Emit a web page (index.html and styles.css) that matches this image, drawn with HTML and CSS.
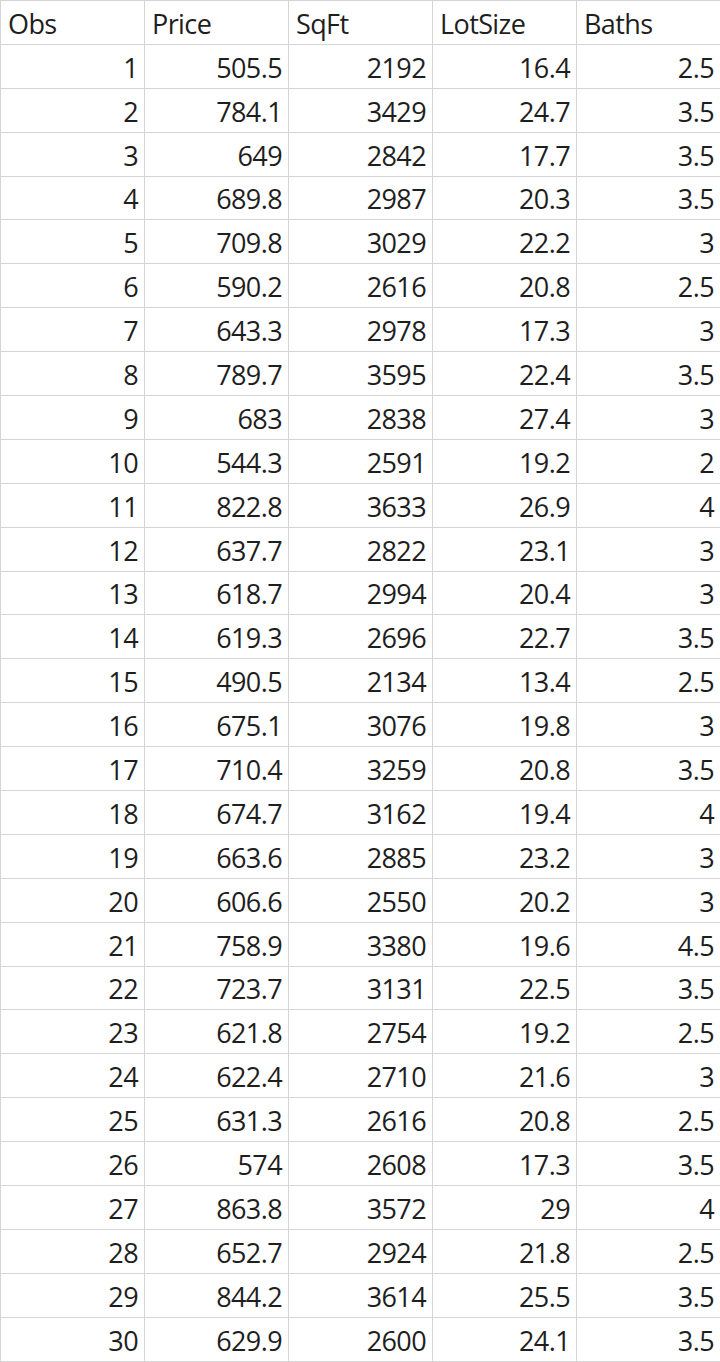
FILE: index.html
```html
<!DOCTYPE html>
<html>
<head>
<meta charset="utf-8">
<link rel="stylesheet" href="styles.css">
</head>
<body>
<table class="sheet">
<colgroup><col class="c"><col class="c"><col class="c"><col class="c"><col class="c"></colgroup>
<thead>
<tr><th>Obs</th><th>Price</th><th>SqFt</th><th>LotSize</th><th>Baths</th></tr>
</thead>
<tbody>
<tr><td>1</td><td>505.5</td><td>2192</td><td>16.4</td><td>2.5</td></tr>
<tr><td>2</td><td>784.1</td><td>3429</td><td>24.7</td><td>3.5</td></tr>
<tr><td>3</td><td>649</td><td>2842</td><td>17.7</td><td>3.5</td></tr>
<tr><td>4</td><td>689.8</td><td>2987</td><td>20.3</td><td>3.5</td></tr>
<tr><td>5</td><td>709.8</td><td>3029</td><td>22.2</td><td>3</td></tr>
<tr><td>6</td><td>590.2</td><td>2616</td><td>20.8</td><td>2.5</td></tr>
<tr><td>7</td><td>643.3</td><td>2978</td><td>17.3</td><td>3</td></tr>
<tr><td>8</td><td>789.7</td><td>3595</td><td>22.4</td><td>3.5</td></tr>
<tr><td>9</td><td>683</td><td>2838</td><td>27.4</td><td>3</td></tr>
<tr><td>10</td><td>544.3</td><td>2591</td><td>19.2</td><td>2</td></tr>
<tr><td>11</td><td>822.8</td><td>3633</td><td>26.9</td><td>4</td></tr>
<tr><td>12</td><td>637.7</td><td>2822</td><td>23.1</td><td>3</td></tr>
<tr><td>13</td><td>618.7</td><td>2994</td><td>20.4</td><td>3</td></tr>
<tr><td>14</td><td>619.3</td><td>2696</td><td>22.7</td><td>3.5</td></tr>
<tr><td>15</td><td>490.5</td><td>2134</td><td>13.4</td><td>2.5</td></tr>
<tr><td>16</td><td>675.1</td><td>3076</td><td>19.8</td><td>3</td></tr>
<tr><td>17</td><td>710.4</td><td>3259</td><td>20.8</td><td>3.5</td></tr>
<tr><td>18</td><td>674.7</td><td>3162</td><td>19.4</td><td>4</td></tr>
<tr><td>19</td><td>663.6</td><td>2885</td><td>23.2</td><td>3</td></tr>
<tr><td>20</td><td>606.6</td><td>2550</td><td>20.2</td><td>3</td></tr>
<tr><td>21</td><td>758.9</td><td>3380</td><td>19.6</td><td>4.5</td></tr>
<tr><td>22</td><td>723.7</td><td>3131</td><td>22.5</td><td>3.5</td></tr>
<tr><td>23</td><td>621.8</td><td>2754</td><td>19.2</td><td>2.5</td></tr>
<tr><td>24</td><td>622.4</td><td>2710</td><td>21.6</td><td>3</td></tr>
<tr><td>25</td><td>631.3</td><td>2616</td><td>20.8</td><td>2.5</td></tr>
<tr><td>26</td><td>574</td><td>2608</td><td>17.3</td><td>3.5</td></tr>
<tr><td>27</td><td>863.8</td><td>3572</td><td>29</td><td>4</td></tr>
<tr><td>28</td><td>652.7</td><td>2924</td><td>21.8</td><td>2.5</td></tr>
<tr><td>29</td><td>844.2</td><td>3614</td><td>25.5</td><td>3.5</td></tr>
<tr><td>30</td><td>629.9</td><td>2600</td><td>24.1</td><td>3.5</td></tr>
</tbody>
</table>
</body>
</html>
```
FILE: styles.css
```css
html, body {
  margin: 0;
  padding: 0;
  background: #ffffff;
}
.sheet {
  border-collapse: collapse;
  table-layout: fixed;
  width: 719px;
  margin: 0 0 0 0;
  font-family: "Open Sans", "Noto Sans", sans-serif;
  font-size: 27px;
  color: #1e1e1e;
  letter-spacing: -0.6px;
}
.sheet .c {
  width: 144px;
}
.sheet th,
.sheet td {
  border: 1px solid #d4d4d4;
  height: 43.9px;
  box-sizing: border-box;
  line-height: 1;
  vertical-align: bottom;
  padding: 0 6px 7px 7px;
  white-space: nowrap;
  overflow: hidden;
}
.sheet th {
  font-weight: normal;
  text-align: left;
}
.sheet td {
  text-align: right;
}
```
